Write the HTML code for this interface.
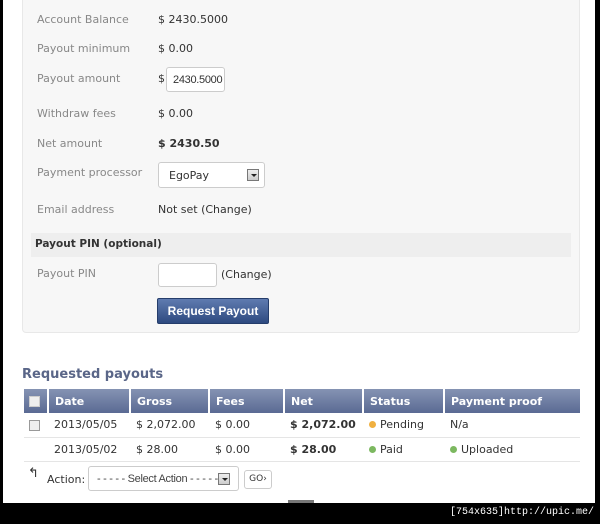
<!DOCTYPE html>
<html><head><style>
*{margin:0;padding:0;box-sizing:border-box}
body{width:600px;height:524px;background:#000;position:relative;overflow:hidden;font-family:"DejaVu Sans",Verdana,sans-serif;font-size:11px;color:#333}
#page{position:absolute;left:3px;top:0;width:592px;height:503px;background:#fff;overflow:hidden}
#panel{position:absolute;left:19px;top:-5px;width:558px;height:338px;background:#f7f7f7;border:1px solid #e8e8e8;border-radius:4px}
.a{position:absolute;white-space:nowrap}
.l{color:#888}
.box{position:absolute;background:#fff;border:1px solid #ccc;border-radius:3px}
.dd{position:absolute;width:12px;height:12px;border:1px solid #777;background:linear-gradient(#eee,#ccc)}
.dd:after{content:"";position:absolute;left:3px;top:4px;border-left:3px solid transparent;border-right:3px solid transparent;border-top:3px solid #222}
th{background:linear-gradient(#8593b3,#5a6a93);color:#fff;font-weight:bold;text-align:left;height:24px;padding-left:6px;border-right:2px solid #fff}
td{height:24px;padding-left:6px;border-bottom:1px solid #e5e5e5}
table{position:absolute;left:21px;top:389px;border-collapse:collapse;width:556px}
.dot{display:inline-block;width:7px;height:7px;border-radius:50%;margin-right:4px;vertical-align:0}
.cb{display:inline-block;width:11px;height:11px;border:1px solid #999;background:#eee;vertical-align:middle}
</style></head><body>
<div id="page">
<div id="panel"></div>
<div class="a l" style="left:34px;top:13px">Account Balance</div><div class="a" style="left:155px;top:13px">$ 2430.5000</div>
<div class="a l" style="left:34px;top:42px">Payout minimum</div><div class="a" style="left:155px;top:42px">$ 0.00</div>
<div class="a l" style="left:34px;top:72px">Payout amount</div><div class="a" style="left:155px;top:72px">$</div>
<div class="box" style="left:163px;top:67px;width:59px;height:25px"><span class="a" style="left:6px;top:6px;font-family:'Liberation Sans',sans-serif;font-size:11px;letter-spacing:-0.3px">2430.5000</span></div>
<div class="a l" style="left:34px;top:107px">Withdraw fees</div><div class="a" style="left:155px;top:107px">$ 0.00</div>
<div class="a l" style="left:34px;top:137px">Net amount</div><div class="a" style="left:155px;top:137px;font-weight:bold">$ 2430.50</div>
<div class="a l" style="left:34px;top:166px">Payment processor</div>
<div class="box" style="left:155px;top:162px;width:107px;height:26px"><span class="a" style="left:10px;top:6px">EgoPay</span><div class="dd" style="left:88px;top:6px"></div></div>
<div class="a l" style="left:34px;top:203px">Email address</div><div class="a" style="left:155px;top:203px">Not set (Change)</div>
<div class="a" style="left:28px;top:233px;width:540px;height:24px;background:#eee"></div>
<div class="a" style="left:32px;top:238px;font-weight:bold;font-size:10.5px">Payout PIN (optional)</div>
<div class="a l" style="left:34px;top:267px">Payout PIN</div>
<div class="box" style="left:155px;top:263px;width:59px;height:24px"></div>
<div class="a" style="left:218px;top:268px">(Change)</div>
<div class="a" style="left:154px;top:298px;width:112px;height:26px;background:linear-gradient(#5f7bb0,#2e4a80);border:1px solid #253d6b;border-radius:2px;color:#fff;font-weight:bold;font-family:'Liberation Sans',sans-serif;font-size:12px;text-align:center;line-height:24px">Request Payout</div>
<div class="a" style="left:19px;top:367px;font-weight:bold;font-size:13px;color:#5a6688">Requested payouts</div>
<table>
<tr><th style="width:24px;padding-left:5px"><span class="cb" style="background:#eee;border-color:#ccc"></span></th><th style="width:82px">Date</th><th style="width:79px">Gross</th><th style="width:75px">Fees</th><th style="width:79px">Net</th><th style="width:81px">Status</th><th style="border-right:0">Payment proof</th></tr>
<tr><td style="padding-left:5px"><span class="cb"></span></td><td>2013/05/05</td><td>$ 2,072.00</td><td>$ 0.00</td><td style="font-weight:bold">$ 2,072.00</td><td><span class="dot" style="background:#f0b040"></span>Pending</td><td>N/a</td></tr>
<tr><td></td><td>2013/05/02</td><td>$ 28.00</td><td>$ 0.00</td><td style="font-weight:bold">$ 28.00</td><td><span class="dot" style="background:#7cb860"></span>Paid</td><td><span class="dot" style="background:#7cb860"></span>Uploaded</td></tr>
</table>
<div class="a" style="left:25px;top:466px;font-size:13px">↰</div>
<div class="a" style="left:44px;top:473px">Action:</div>
<div class="box" style="left:85px;top:466px;width:151px;height:25px"><span class="a" style="left:8px;top:6px;font-family:'Liberation Sans',sans-serif;font-size:11px;letter-spacing:-0.3px;color:#444">- - - - - Select Action - - - - -</span><div class="dd" style="left:129px;top:6px"></div></div>
<div class="box" style="left:241px;top:470px;width:28px;height:19px;font-size:9px;text-align:center;line-height:17px">GO›</div>
<div class="a" style="left:285px;top:500px;width:26px;height:3px;background:#777"></div>
</div>
<div class="a" style="right:6px;top:507px;color:#fff;font-family:'Liberation Mono',monospace;font-size:10px">[754x635]http://upic.me/</div>
</body></html>
